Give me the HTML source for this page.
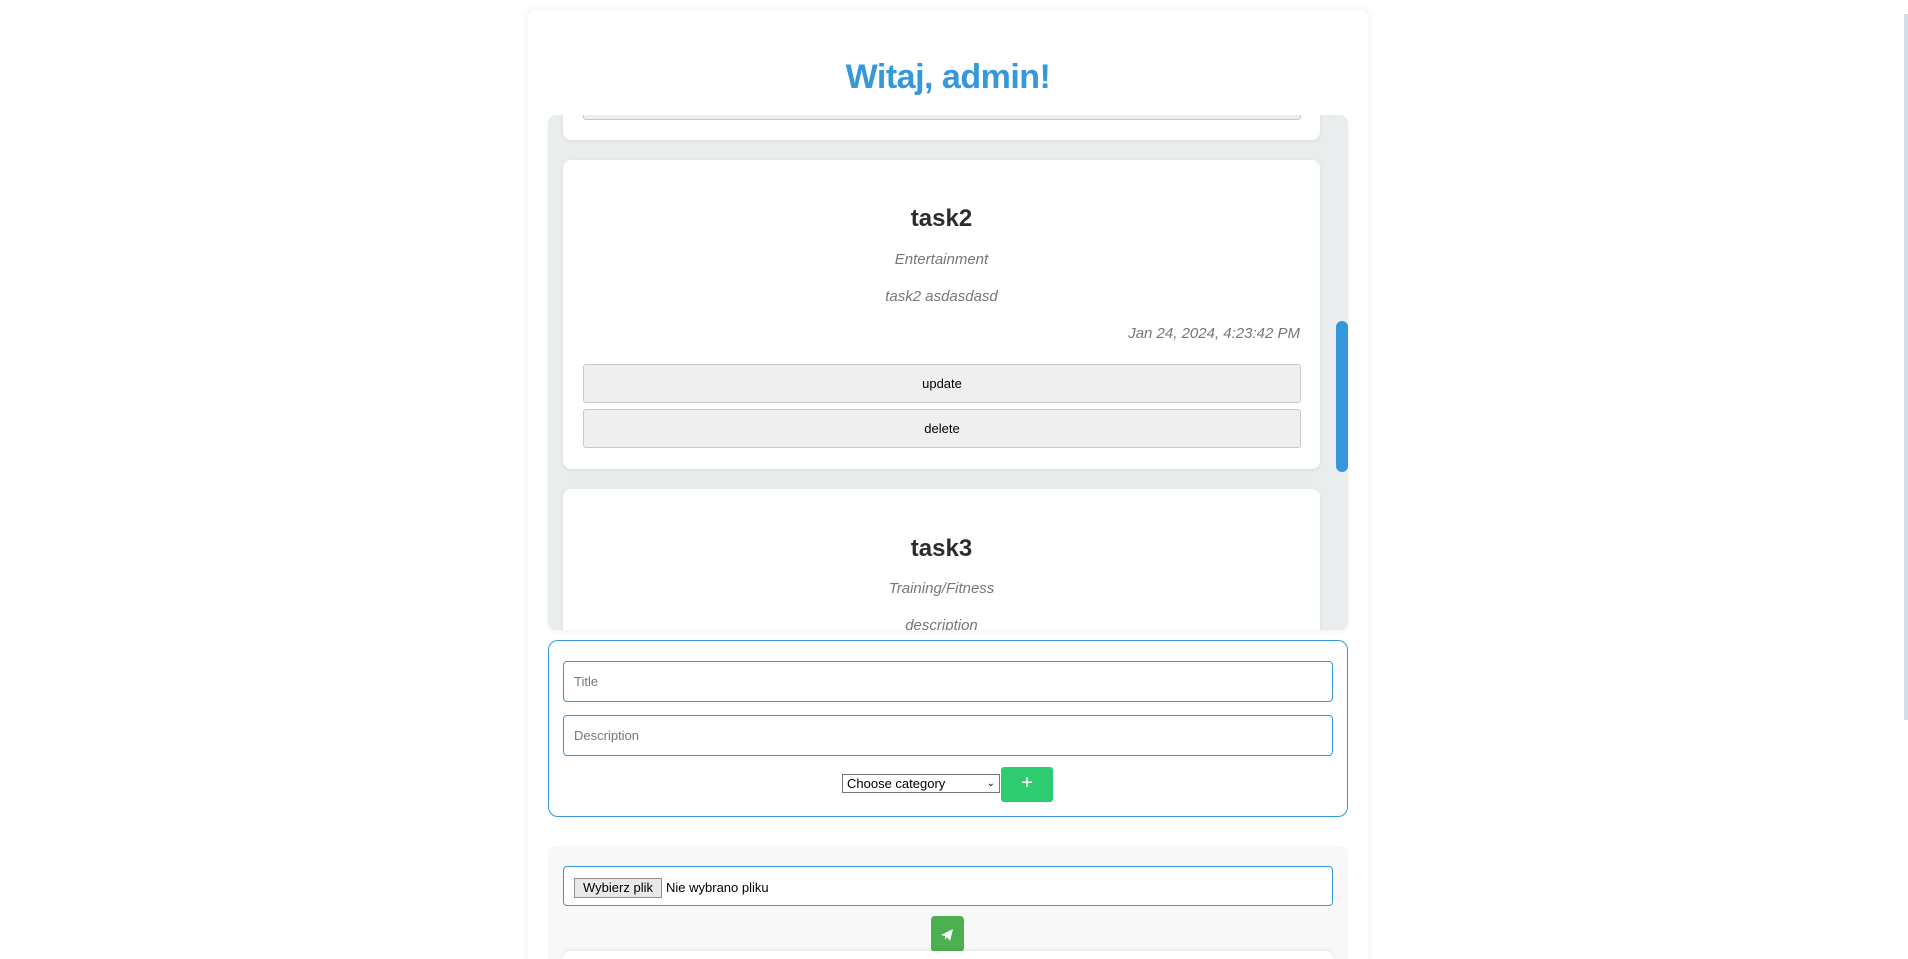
<!DOCTYPE html>
<html style="overflow:hidden;height:959px"><head><meta charset="utf-8"><style>
*{box-sizing:border-box;margin:0;padding:0}
body{width:1908px;height:959px;overflow:hidden;background:#fff;font-family:"Liberation Sans",sans-serif;position:relative}
.abs{position:absolute}
.main{left:528px;top:10px;width:840px;height:949px;background:#fff;border-radius:8px 8px 0 0;box-shadow:0 0 10px rgba(0,0,0,.08)}
h1{position:absolute;left:528px;width:840px;top:58px;text-align:center;color:#3498db;font-size:34px;font-weight:bold;letter-spacing:-0.5px}
.list{left:548px;top:115px;width:800px;height:515px;background:#eaeded;border-radius:8px;overflow:hidden;box-shadow:0 2px 4px rgba(0,0,0,.05)}
.card{position:absolute;left:15px;width:757px;background:#fff;border-radius:8px;box-shadow:0 1px 4px rgba(0,0,0,.08)}
.t{position:absolute;width:100%;text-align:center;font-weight:bold;font-size:24px;color:#2c2c2c}
.i{position:absolute;width:100%;text-align:center;font-style:italic;font-size:15px;color:#777}
.btn{position:absolute;left:20px;width:718px;height:39px;background:#efefef;border:1px solid #c8c8c8;border-radius:3px;text-align:center;line-height:37px;font-size:13px;color:#000}
.form{left:548px;top:640px;width:800px;height:177px;border:1px solid #3498db;border-radius:10px;background:#fff}
.inp{position:absolute;left:14px;width:770px;height:41px;border:1px solid #3498db;border-radius:4px;font-size:13px;color:#777;padding-left:10px;line-height:39px}
</style></head><body>
<div class="abs main"></div>
<h1>Witaj, admin!</h1>
<div class="abs list">
  <div class="card" style="top:-60px;height:85px"><div class="btn" style="top:25px;height:40px"></div></div>
  <div class="card" style="top:45px;height:309px">
    <div class="t" style="top:45px">task2</div>
    <div class="i" style="top:91px">Entertainment</div>
    <div class="i" style="top:128px">task2 asdasdasd</div>
    <div class="i" style="top:165px;text-align:right;right:20px;width:auto">Jan 24, 2024, 4:23:42 PM</div>
    <div class="btn" style="top:204px">update</div>
    <div class="btn" style="top:249px">delete</div>
  </div>
  <div class="card" style="top:374px;height:300px">
    <div class="t" style="top:46px">task3</div>
    <div class="i" style="top:91px">Training/Fitness</div>
    <div class="i" style="top:128px">description</div>
  </div>
  <div class="abs" style="left:788px;top:206px;width:12px;height:151px;background:#3498db;border-radius:6px"></div>
</div>
<div class="abs form">
  <div class="inp" style="top:20px">Title</div>
  <div class="inp" style="top:74px">Description</div>
  <div class="abs" style="left:293px;top:133px;width:158px;height:19px;border:1px solid #767676;font-size:13px;line-height:17px;padding-left:4px;color:#000;background:#fff">Choose category<span style="position:absolute;right:4px;top:0;font-size:10px">&#8964;</span></div>
  <div class="abs" style="left:452px;top:126px;width:52px;height:35px;background:#2ecc71;border-radius:3px;color:#fff;text-align:center;line-height:33px;font-size:20px">+</div>
</div>
<div class="abs" style="left:548px;top:846px;width:800px;height:113px;background:#f8f8f8;border-radius:8px 8px 0 0"></div>
<div class="abs" style="left:563px;top:866px;width:770px;height:40px;border:1px solid #3498db;border-radius:4px;background:#fff"></div>
<div class="abs" style="left:574px;top:878px;width:88px;height:20px;background:#e9e9e9;border:1px solid #8f8f8f;font-size:13px;line-height:18px;text-align:center;color:#000">Wybierz plik</div>
<div class="abs" style="left:666px;top:880px;font-size:13px;color:#000">Nie wybrano pliku</div>
<div class="abs" style="left:931px;top:916px;width:33px;height:36px;background:#4caf50;border-radius:4px">
<svg width="33" height="36" viewBox="0 0 33 36"><path d="M10 19 L22 13 L19 25 L16 21 L14 24 L14 20 Z" fill="#fff"/></svg></div>
<div class="abs" style="left:563px;top:951px;width:770px;height:8px;background:#fff;border-radius:8px 8px 0 0;box-shadow:0 -1px 4px rgba(0,0,0,.08)"></div>
<div class="abs" style="left:1904px;top:14px;width:4px;height:706px;background:#d3dde5"></div>
</body></html>
